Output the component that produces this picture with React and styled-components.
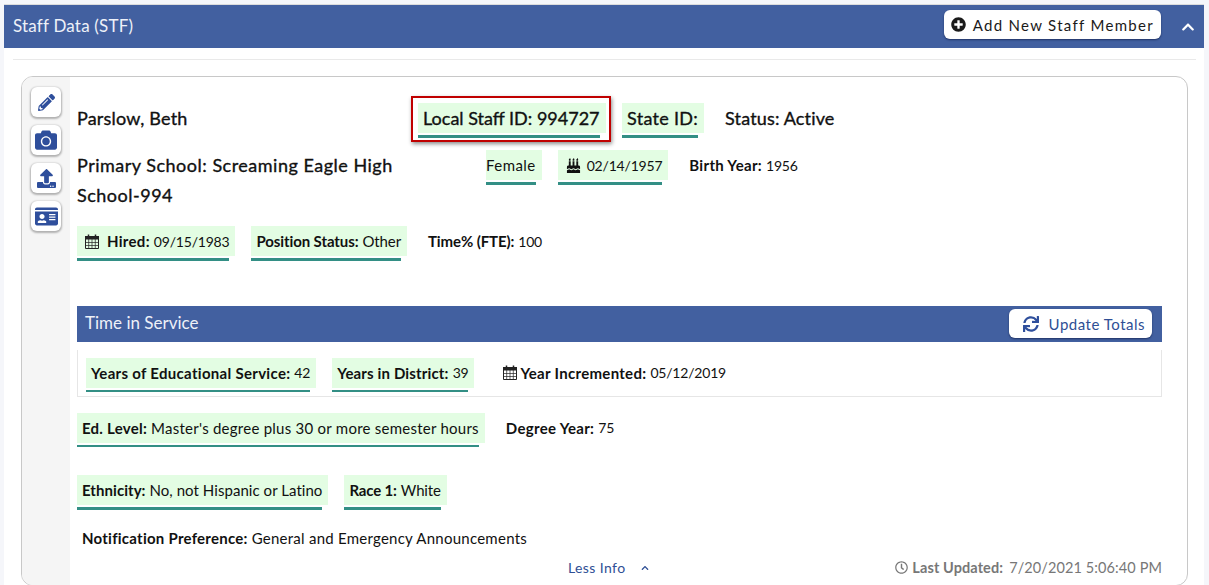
import styled, { createGlobalStyle } from "styled-components";
import { FaBirthdayCake, FaCamera, FaChevronUp, FaIdCard, FaPencilAlt, FaPlusCircle, FaRegClock, FaSync, FaUpload } from "react-icons/fa";

const Global = createGlobalStyle`
  html, body { margin: 0; height: 585px; overflow: hidden; background: #f5f6fa; }
  body { font-family: "Lato", "Liberation Sans", sans-serif; color: #111; }
  * { box-sizing: border-box; }
`;

const Panel = styled.section`
  margin: 4px 5px 0 4px;
  height: 581px;
  overflow: hidden;
  background: #fff;
  border-top: 1px solid #dcdcdc;
`;

const Header = styled.header`
  height: 43px;
  background: #4260a0;
  display: flex;
  align-items: center;
  justify-content: space-between;
  padding: 0 9px;
  color: #eef1f8;
  font-size: 17px;
  letter-spacing: 0.2px;
`;

const Title = styled.span`
  margin-bottom: 2px;
`;

const HeaderRight = styled.div`
  display: flex;
  align-items: center;
  gap: 20px;
  color: #fff;
`;

const WhiteButton = styled.button`
  display: flex;
  align-items: center;
  gap: ${(p) => p.$gap || 7}px;
  height: 29px;
  margin-bottom: ${(p) => p.$lift || 0}px;
  padding: 0 7px 0 ${(p) => p.$pad || 7}px;
  background: #fff;
  border: 0;
  border-radius: 6px;
  box-shadow: 0 1px 2px rgba(10, 20, 60, 0.6);
  font-family: inherit;
  font-size: 15px;
  letter-spacing: ${(p) => p.$spacing || 0}px;
  color: ${(p) => p.$color || "#1a1a1a"};
  svg { color: ${(p) => p.$iconColor || "#1a1a1a"}; }
`;

const Rule = styled.hr`
  margin: 11px 8px 16px 9px;
  border: 0;
  border-top: 1px solid #e9e9e9;
`;

const Card = styled.div`
  display: flex;
  height: 510px;
  margin: 0 16px 0 17px;
  border: 1px solid #c8c8c8;
  border-radius: 12px;
  overflow: hidden;
`;

const Side = styled.aside`
  width: 48px;
  flex: none;
  background: #f5f5f5;
  padding-top: 10px;
  display: flex;
  flex-direction: column;
  align-items: center;
  gap: 8px;
`;

const SideButton = styled.button`
  width: 30px;
  height: 30px;
  padding: 0;
  display: flex;
  align-items: center;
  justify-content: center;
  background: #fff;
  border: 0;
  border-radius: 6px;
  box-shadow: 0 1px 2px 1px rgba(0, 0, 0, 0.28);
  color: #2f4f9c;
`;

const Main = styled.main`
  flex: 1;
  padding: 19px 25px 0 7px;
  min-width: 0;
`;

const TopRow = styled.div`
  display: flex;
  align-items: flex-start;
  margin-top: ${(p) => p.$top || 0}px;
`;

const Name = styled.div`
  width: 334px;
  flex: none;
  font-size: 18px;
  line-height: 44px;
  letter-spacing: 0.2px;
  -webkit-text-stroke: 0.35px #111;
`;

const School = styled.div`
  width: 409px;
  flex: none;
  padding-right: 70px;
  font-size: 18px;
  line-height: 30px;
  letter-spacing: 0.5px;
  -webkit-text-stroke: 0.35px #111;
`;

const Row = styled.div`
  display: flex;
  align-items: flex-start;
  margin-top: ${(p) => p.$top || 0}px;
  gap: 16px;
`;

const Tag = styled.div`
  flex: none;
  margin-top: ${(p) => p.$top || 0}px;
  &::after {
    content: "";
    display: block;
    height: 2.5px;
    margin: 2px 6px 0 0;
    background: #338f85;
  }
`;

const TagFill = styled.div`
  display: flex;
  align-items: center;
  height: 30px;
  padding: 0 6px 0 ${(p) => (p.$left === undefined ? 5 : p.$left)}px;
  background: #e3fde3;
  font-size: 15px;
  letter-spacing: ${(p) => (p.$spacing === undefined ? 0.3 : p.$spacing)}px;
  white-space: nowrap;
`;

const BigFill = styled(TagFill)`
  font-size: 18px;
  letter-spacing: ${(p) => p.$spacing || 0}px;
  -webkit-text-stroke: 0.35px #111;
`;

const Plain = styled.div`
  display: flex;
  align-items: center;
  height: 30px;
  margin-left: ${(p) => p.$left || 0}px;
  font-size: 15px;
  letter-spacing: ${(p) => (p.$spacing === undefined ? 0.3 : p.$spacing)}px;
  white-space: nowrap;
`;

const BigPlain = styled(Plain)`
  margin-top: 7px;
  font-size: 18px;
  letter-spacing: 0.15px;
  -webkit-text-stroke: 0.35px #111;
`;

const Note = styled(Plain)`
  margin-top: 13px;
  padding-left: 5px;
`;

const Label = styled.b`
  font-weight: 700;
  margin-right: 4px;
`;

const Num = styled.span`
  font-size: 14px;
  letter-spacing: -0.2px;
`;

const Alert = styled.div`
  display: flex;
  align-items: flex-start;
  width: 200px;
  height: 46px;
  margin-right: 11px;
  padding: 5px 0 0 5px;
  border: 2px solid #c00000;
  box-shadow: 1px 2px 4px rgba(0, 0, 0, 0.45);
`;

const Bar = styled.div`
  height: 36px;
  margin-top: 45px;
  padding: 0 10px 0 8px;
  display: flex;
  align-items: center;
  justify-content: space-between;
  background: #4260a0;
  color: #eef1f8;
  font-size: 17px;
`;

const Service = styled.div`
  height: 47px;
  margin: 8px 0 16px;
  padding: 8px 8px 0;
  border: 1px solid #e6e6e6;
  border-top: 0;
`;

const Foot = styled.footer`
  display: flex;
  align-items: center;
  justify-content: space-between;
  margin-top: 3px;
  height: 24px;
`;

const LessInfo = styled.div`
  margin-left: 491px;
  display: flex;
  align-items: center;
  gap: 15px;
  font-size: 14px;
  letter-spacing: 0.4px;
  color: #2f4f95;
`;

const Updated = styled.div`
  display: flex;
  align-items: center;
  gap: 4px;
  font-size: 14.5px;
  letter-spacing: 0.1px;
  color: #777;
  b { font-weight: 700; margin-right: 2px; }
`;

const CakeIcon = styled(FaBirthdayCake)`
  margin: 0 6px 0 3px;
  flex: none;
`;

const CalendarSvg = styled.svg`
  margin-right: ${(p) => p.$gap}px;
  flex: none;
`;

// fa4 style calendar, the fa5 one has no grid
const Calendar = ({ gap = 8 }) => (
  <CalendarSvg $gap={gap} width="14" height="15" viewBox="0 0 14 15">
    <path d="M.5 2.5h13v12H.5z" fill="none" stroke="#222" />
    <path d="M0 2h14v3.5H0z" fill="#222" />
    <path d="M3.5 .5v2.5M10.5 .5v2.5" stroke="#222" strokeWidth="1.5" />
    <path d="M.5 8.5h13M.5 11.5h13M3.7 5v9M7 5v9M10.3 5v9" stroke="#222" strokeWidth=".7" />
  </CalendarSvg>
);

const App = () => {
  return (
    <>
      <Global />
      <Panel>
        <Header>
          <Title>Staff Data (STF)</Title>
          <HeaderRight>
            <WhiteButton $spacing={1.3} $lift={4}>
              <FaPlusCircle size={15} />
              Add New Staff Member
            </WhiteButton>
            <FaChevronUp size={14} />
          </HeaderRight>
        </Header>
        <Rule />
        <Card>
          <Side>
            <SideButton><FaPencilAlt size={17} /></SideButton>
            <SideButton><FaCamera size={22} /></SideButton>
            <SideButton><FaUpload size={19} /></SideButton>
            <SideButton><FaIdCard size={23} /></SideButton>
          </Side>
          <Main>
            <TopRow>
              <Name>Parslow, Beth</Name>
              <Alert>
                <Tag>
                  <BigFill>Local Staff ID: 994727</BigFill>
                </Tag>
              </Alert>
              <Tag $top={7}>
                <BigFill $spacing={0.3}>State ID:</BigFill>
              </Tag>
              <BigPlain $left={21}>Status: Active</BigPlain>
            </TopRow>
            <TopRow $top={8}>
              <School>Primary School: Screaming Eagle High School-994</School>
              <Row>
                <Tag><TagFill $left={0} $spacing={0.45}>Female</TagFill></Tag>
                <Tag>
                  <TagFill>
                    <CakeIcon size={15} />
                    <Num>02/14/1957</Num>
                  </TagFill>
                </Tag>
                <Plain $left={5}><Label>Birth Year:</Label> <Num>1956</Num></Plain>
              </Row>
            </TopRow>
            <Row $top={16}>
              <Tag>
                <TagFill $left={8}>
                  <Calendar />
                  <Label>Hired:</Label> <Num>09/15/1983</Num>
                </TagFill>
              </Tag>
              <Tag><TagFill $spacing={-0.1}><Label>Position Status:</Label> Other</TagFill></Tag>
              <Plain $left={5} $spacing={-0.1}><Label>Time% (FTE):</Label> <Num>100</Num></Plain>
            </Row>
            <Bar>
              <Title>Time in Service</Title>
              <WhiteButton $color="#2f4f95" $iconColor="#2f4f9c" $gap={10} $pad={14} $spacing={0.5}>
                <FaSync size={16} />
                Update Totals
              </WhiteButton>
            </Bar>
            <Service>
              <Row>
                <Tag><TagFill><Label>Years of Educational Service:</Label> <Num>42</Num></TagFill></Tag>
                <Tag><TagFill $spacing={0.15}><Label>Years in District:</Label> <Num>39</Num></TagFill></Tag>
                <Plain $left={13}><Calendar gap={3} /><Label>Year Incremented:</Label> <Num>05/12/2019</Num></Plain>
              </Row>
            </Service>
            <Row>
              <Tag><TagFill $spacing={0.25}><Label>Ed. Level:</Label> Master's degree plus 30 or more semester hours</TagFill></Tag>
              <Plain $left={5}><Label>Degree Year:</Label> <Num>75</Num></Plain>
            </Row>
            <Row $top={28}>
              <Tag><TagFill $spacing={0.05}><Label>Ethnicity:</Label> No, not Hispanic or Latino</TagFill></Tag>
              <Tag><TagFill $spacing={-0.15}><Label>Race 1:</Label> White</TagFill></Tag>
            </Row>
            <Note $spacing={0.25}>
              <Label>Notification Preference:</Label> General and Emergency Announcements
            </Note>
            <Foot>
              <LessInfo>Less Info <FaChevronUp size={8} /></LessInfo>
              <Updated>
                <FaRegClock size={13} />
                <b>Last Updated:</b> 7/20/2021 5:06:40 PM
              </Updated>
            </Foot>
          </Main>
        </Card>
      </Panel>
    </>
  );
};

export default App;
